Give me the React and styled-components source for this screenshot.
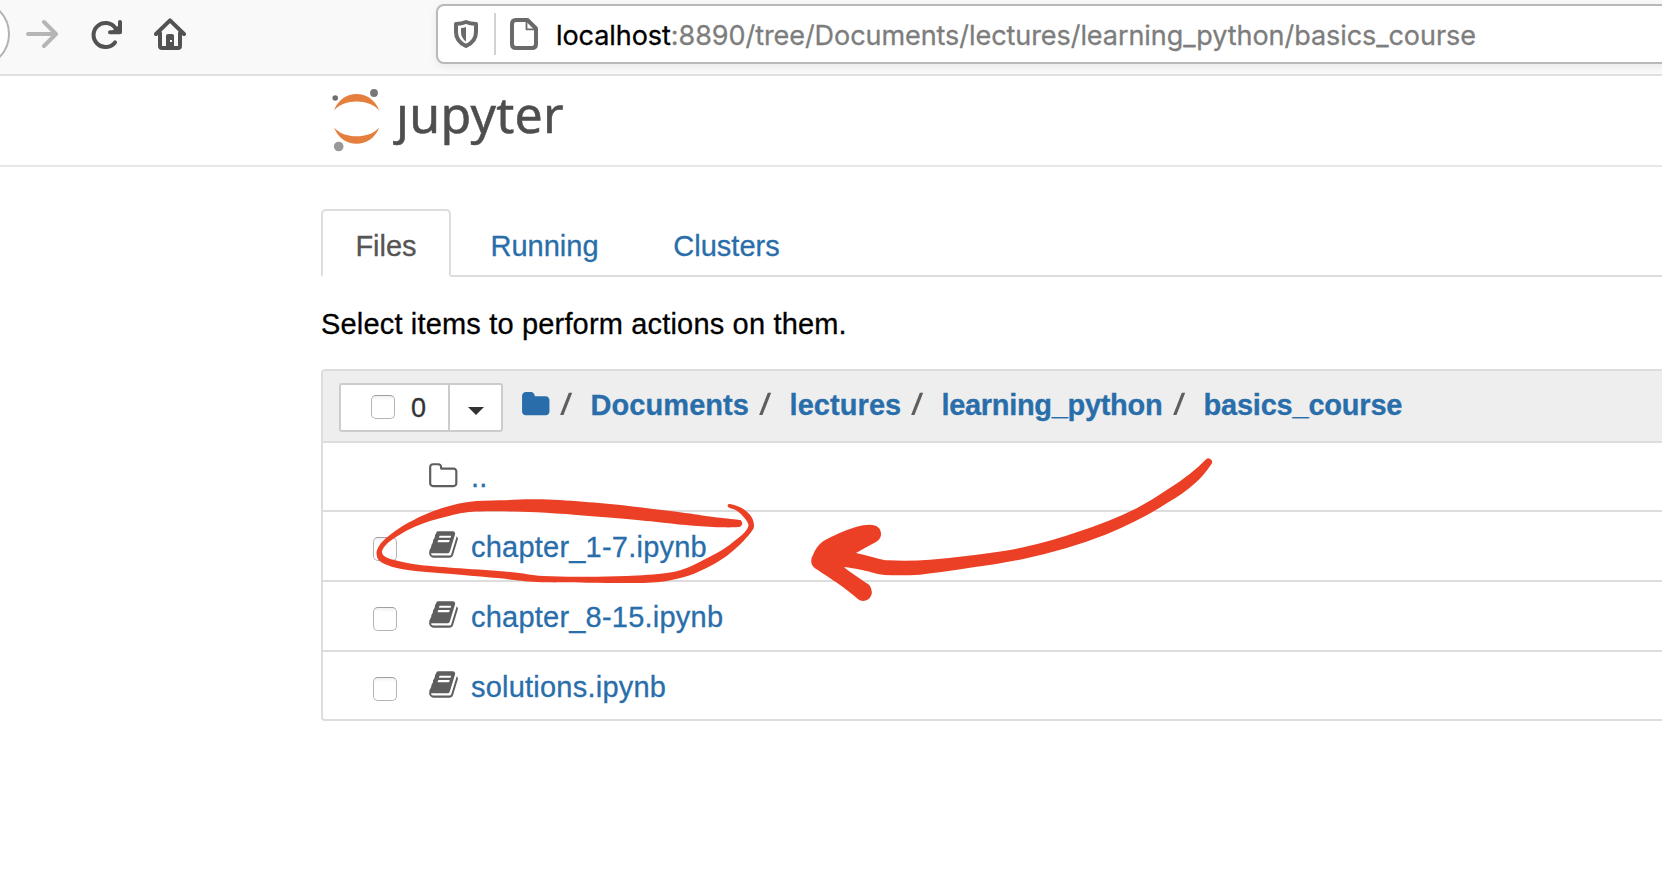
import React from "react";
import styled, { createGlobalStyle } from "styled-components";

const LINK = "#296eaa";
const RULE = "#dddddd";
const INK = "#5e5e5e";
const MARKER = "#ec4026";

const GlobalStyle = createGlobalStyle`
  * { box-sizing: border-box; }
  body {
    margin: 0;
    background: #fff;
    font-family: "Liberation Sans", Arial, sans-serif;
    font-size: 29px;
    line-height: 40px;
    letter-spacing: 0;
    -webkit-text-stroke: 0.3px currentColor;
    color: #000;
  }
  a { color: ${LINK}; text-decoration: none; }
  svg { display: block; flex: none; }
`;

const Window = styled.div`
  position: relative;
  width: 1662px;
  height: 874px;
  overflow: hidden;
  background: #fff;
`;

/* ---------- browser chrome ---------- */

const Toolbar = styled.div`
  display: flex;
  align-items: flex-start;
  height: 76px;
  background: #f9f9fa;
  border-bottom: 2px solid #e0e0e1;
`;

const BackButton = styled.div`
  flex: none;
  width: 68px;
  height: 68px;
  margin-left: -58px;
  border: 2px solid #b2b2b3;
  border-radius: 50%;
  background: #fff;
`;

const NavIcons = styled.div`
  display: flex;
  flex: none;
  gap: 32px;
  padding: 18px 0 0 14px;
  width: 426px;
`;

const UrlBar = styled.div`
  display: flex;
  align-items: center;
  flex: none;
  width: 1300px;
  height: 60px;
  margin-top: 4px;
  padding-left: 16px;
  border: 2px solid #b9b9ba;
  border-radius: 8px;
  background: #fff;
  box-shadow: 0 2px 8px rgba(0, 0, 0, 0.07);
`;

const UrlDivider = styled.div`
  width: 2px;
  height: 42px;
  margin: 0 14px 0 16px;
  background: #d2d2d3;
`;

const Address = styled.div`
  margin-left: 18px;
  padding-top: 3px;
  font-family: Inter, "Liberation Sans", sans-serif;
  font-size: 27px;
  letter-spacing: -0.06px;
  white-space: nowrap;
  color: #7d7d7d;
`;

const Host = styled.span`
  color: #000;
`;

/* ---------- page ---------- */

const Header = styled.header`
  display: flex;
  align-items: flex-start;
  height: 91px;
  padding: 12px 0 0 331px;
  border-bottom: 2px solid #e7e7e7;
`;

const Wordmark = styled.div`
  margin: -14px 0 0 15px;
  font-family: "Noto Sans", "Open Sans", sans-serif;
  font-size: 50px;
  line-height: 80px;
  letter-spacing: 0.3px;
  -webkit-text-stroke: 0.5px #4e4e4e;
  color: #4e4e4e;
`;

const Content = styled.main`
  padding: 42px 0 0 321px;
`;

const TabBar = styled.nav`
  display: flex;
  gap: 4px;
  height: 68px;
  border-bottom: 2px solid ${RULE};
`;

const Tab = styled.a`
  width: ${(p) => p.$width}px;
  height: 68px;
  padding-top: 15px;
  text-align: center;
  border: 2px solid ${(p) => (p.$active ? RULE : "transparent")};
  border-bottom-color: ${(p) => (p.$active ? "#fff" : "transparent")};
  border-radius: 5px 5px 0 0;
  color: ${(p) => (p.$active ? "#555" : LINK)};
`;

const Hint = styled.p`
  margin: 27px 0 25px;
  letter-spacing: 0.17px;
`;

const Panel = styled.section`
  width: 1400px;
  height: 352px;
  border: 2px solid ${RULE};
  border-radius: 4px;
  overflow: hidden;
`;

const PanelHead = styled.div`
  display: flex;
  align-items: flex-start;
  height: 72px;
  padding: 12px 0 0 16px;
  background: #eee;
  border-bottom: 2px solid ${RULE};
`;

const ButtonGroup = styled.div`
  display: flex;
  width: 164px;
  height: 49px;
  border: 2px solid #ccc;
  border-radius: 3px;
  background: #fff;
`;

const SelectAll = styled.div`
  display: flex;
  align-items: flex-start;
  gap: 16px;
  width: 109px;
  padding: 10px 0 0 30px;
  border-right: 2px solid #ccc;
`;

const Count = styled.span`
  margin-top: -7px;
  font-size: 27px;
  color: #333;
`;

const CaretButton = styled.div`
  padding: 22px 0 0 18px;
`;

const Caret = styled.div`
  border: 8px solid transparent;
  border-top-color: #333;
  border-bottom: 0;
`;

const Checkbox = styled.div`
  flex: none;
  width: 24px;
  height: 24px;
  border: 1.5px solid #b4b4b4;
  border-top-color: #a0a0a0;
  border-radius: 5px;
  background: linear-gradient(#f1f1f1, #fff 20%);
`;

const Breadcrumb = styled.div`
  display: flex;
  padding: 2px 0 0 18px;
`;

const FolderLink = styled.a`
  padding-top: 5px;
  margin-right: 9px;
`;

const Crumb = styled.a`
  font-weight: 700;
  width: ${(p) => p.$width}px;
  letter-spacing: ${(p) => p.$spacing}px;
`;

const Slash = styled.span`
  width: 31px;
  display: block;
  padding-top: 7px;
`;

const Row = styled.div`
  display: flex;
  align-items: flex-start;
  height: ${(p) => p.$height || 70}px;
  padding-left: 50px;
  border-bottom: 2px solid ${RULE};
  &:last-child { border-bottom: 0; }
  ${Checkbox} { margin-top: 25px; }
`;

const CheckSpace = styled.div`
  width: 24px;
`;

const RowIcon = styled.div`
  width: 30px;
  margin: ${(p) => p.$top || 16.5}px 13px 0 31px;
`;

const Name = styled.a`
  padding-top: ${(p) => p.$top || 15}px;
  letter-spacing: 0.22px;
`;

const Annotation = styled.svg`
  position: absolute;
  left: 0;
  top: 0;
  pointer-events: none;
`;

/* ---------- icons ---------- */

const ForwardIcon = () => (
  <svg width="34" height="32" viewBox="0 0 34 32" fill="none" stroke="#b5b5b6" strokeWidth="4" strokeLinecap="round" strokeLinejoin="round">
    <path d="M4 16H31M20 4L32 16L20 28" />
  </svg>
);

const ReloadIcon = () => (
  <svg width="32" height="32" viewBox="0 0 32 32" fill="none" stroke="#525252" strokeWidth="4" strokeLinecap="round">
    <path d="M25.3 10A12 12 0 1 0 25 24.4" />
    <path d="M30 4V14.3H20" strokeLinejoin="round" />
    <path d="M22 13L29 7V14Z" fill="#525252" stroke="none" />
  </svg>
);

const HomeIcon = () => (
  <svg width="32" height="34" viewBox="0 0 32 34" fill="none" stroke="#525252" strokeWidth="4" strokeLinecap="round" strokeLinejoin="round">
    <path d="M2 16L16 2.4L30 16" />
    <path d="M6 15V28Q6 30 8 30H24Q26 30 26 28V15" />
    <path d="M12 29V18Q12 16 14 16H18Q20 16 20 18V29Z" fill="#525252" stroke="none" />
    <rect x="16" y="22" width="2" height="2" fill="#f9f9fa" stroke="none" />
  </svg>
);

const ShieldIcon = () => (
  <svg width="24" height="28" viewBox="0 0 24 28">
    <path d="M12 2Q16 3.600 22 4V12Q22 21.500 12 26Q2 21.500 2 12V4Q8 3.600 12 2Z" fill="none" stroke="#6a6a6a" strokeWidth="4" strokeLinejoin="round" />
    <path d="M12 7V21.500Q7 18 7 12V8Q10 8 12 7Z" fill="#6a6a6a" />
  </svg>
);

const PageIcon = () => (
  <svg width="28" height="32" viewBox="0 0 28 32" fill="none" stroke="#6a6a6a" strokeLinejoin="round">
    <path d="M6 2H17.500L26 10.500V26Q26 30 22 30H6Q2 30 2 26V6Q2 2 6 2Z" strokeWidth="4" />
    <path d="M16.500 3V11.300H25" strokeWidth="1.800" />
  </svg>
);

const JupyterMark = () => (
  <svg width="50" height="66" viewBox="331 88 50 66">
    <path d="M334 110.500C342 88.600 371 88.600 379.300 110.500C369 98.500 344 98.500 334 110.500Z" fill="#e57f3e" />
    <path d="M334 127.500C342 149.200 371 149.200 379.300 127.500C369 139.300 344 139.300 334 127.500Z" fill="#e57f3e" />
    <circle cx="335.200" cy="98" r="2.800" fill="#6f6f6f" />
    <circle cx="374" cy="93" r="3.900" fill="#767677" />
    <circle cx="338.700" cy="146.500" r="4.800" fill="#989898" />
  </svg>
);

const FolderOpenOutline = () => (
  <svg width="30.5" height="30.5" viewBox="0 0 1792 1792" fill={INK}>
    <path d="M1600 1312v-704q0-40-28-68t-68-28h-704q-40 0-68-28t-28-68v-64q0-40-28-68t-68-28h-320q-40 0-68 28t-28 68v960q0 40 28 68t68 28h1216q40 0 68-28t28-68zm128-704v704q0 92-66 158t-158 66h-1216q-92 0-158-66t-66-158v-960q0-92 66-158t158-66h320q92 0 158 66t66 158v32h672q92 0 158 66t66 158z" />
  </svg>
);

const FolderSolid = () => (
  <svg width="29.5" height="29.5" viewBox="0 0 1792 1792" fill={LINK}>
    <path d="M1728 608v704q0 92-66 158t-158 66h-1216q-92 0-158-66t-66-158v-960q0-92 66-158t158-66h320q92 0 158 66t66 158v32h672q92 0 158 66t66 158z" />
  </svg>
);

const BookIcon = () => (
  <svg width="31" height="31" viewBox="0 0 1792 1792" fill={INK}>
    <path d="M1703 478q40 57 18 129l-275 906q-19 64-76.500 107.500t-122.500 43.500h-923q-77 0-148.500-53.500t-99.500-131.500q-24-67-2-127 0-4 3-27t4-37q1-8-3-21.500t-3-19.500q2-11 8-21t16.500-23.500 16.500-23.500q23-38 45-91.500t30-91.500q3-10 .5-30t-.5-28q3-11 17-28t17-23q21-36 42-92t25-90q1-9-2.500-32t.5-28q4-13 22-30.500t22-22.500q19-26 42.500-84.500t27.500-96.500q1-8-3-25.500t-2-26.500q2-8 9-18t18-23 17-21q8-12 16.500-30.500t15-35 16-36 19.500-32 26.500-23.500 36-11.500 47.500 5.500l-1 3q38-9 51-9h761q74 0 114 56t18 130l-274 906q-36 119-71.500 153.500t-128.500 34.500h-869q-27 0-38 15-11 16-1 43 24 70 144 70h923q29 0 56-15.500t35-41.500l300-987q7-22 5-57 38 15 59 43zm-1064 2q-4 13 2 22.500t20 9.500h608q13 0 25.500-9.500t16.500-22.500l21-64q4-13-2-22.500t-20-9.500h-608q-13 0-25.500 9.500t-16.500 22.500zm-83 256q-4 13 2 22.500t20 9.500h608q13 0 25.500-9.500t16.500-22.500l21-64q4-13-2-22.500t-20-9.500h-608q-13 0-25.500 9.500t-16.500 22.500z" />
  </svg>
);

const SlashMark = () => (
  <Slash>
    <svg width="13" height="24" viewBox="0 0 13 24">
      <path d="M8.800 0.800H12.200L3.500 23H0.100Z" fill={INK} />
    </svg>
  </Slash>
);

/* Closed curve through a list of points. */
function smooth(pts) {
  const n = pts.length;
  const at = (i) => pts[(i + n) % n];
  let d = `M${pts[0]}`;
  for (let i = 0; i < n; i++) {
    const [a, b, c, e] = [at(i - 1), at(i), at(i + 1), at(i + 2)];
    d += `C${b[0] + (c[0] - a[0]) / 6} ${b[1] + (c[1] - a[1]) / 6} ${c[0] - (e[0] - b[0]) / 6} ${c[1] - (e[1] - b[1]) / 6} ${c}`;
  }
  return d + "Z";
}

const RING = [
  [1147, 100], [1143, 92], [1134, 89], [1060, 81], [960, 67], [800, 47], [670, 35], [530, 28], [420, 31], [330, 35], [260, 50], [190, 76],
  [120, 113], [75, 147], [54, 173], [50, 194], [60, 214], [95, 230], [160, 242], [300, 254], [420, 265], [530, 276],
  [680, 278], [800, 279], [890, 277], [970, 262], [1035, 236], [1090, 205], [1135, 168], [1172, 128], [1182, 107], [1174, 80], [1150, 57],
  [1125, 46], [1107, 42], [1103, 48], [1108, 53], [1128, 61], [1150, 80], [1165, 103], [1157, 123], [1130, 148], [1085, 181], [1030, 210],
  [980, 234], [920, 249], [800, 258], [680, 260], [550, 258], [450, 246], [300, 235], [180, 225], [115, 213], [78, 202],
  [66, 187], [75, 168], [100, 146], [150, 117], [210, 93], [270, 77], [330, 66], [420, 64], [530, 67], [650, 75], [800, 87],
  [910, 98], [1000, 107], [1090, 112], [1134, 111], [1143, 108],
];

const ARROW =
  "M1246 60Q1252 52 1260 56Q1270 62 1265 71Q1240 108 1215 130Q1180 162 1130 190Q1060 236 950 283Q830 330 700 357Q640 370 550 382Q450 398 390 404Q340 407 285 405C255 403 235 390 162 381Q175 393 238 435Q249 450 244 466C236 485 214 488 200 474C160 440 140 428 75 385Q55 368 70 343Q78 320 100 303Q150 275 200 260Q225 253 248 255Q275 260 273 284Q272 297 258 306Q235 318 198 339Q225 345 255 353C270 357 282 361 295 361Q360 364 420 359Q490 353 560 344Q640 335 700 322Q790 302 860 277Q960 245 1040 205Q1090 178 1130 150Q1170 125 1200 101Q1225 82 1246 60Z";

const files = [
  { name: "chapter_1-7.ipynb", height: 70 },
  { name: "chapter_8-15.ipynb", height: 70 },
  { name: "solutions.ipynb", height: 67 },
];

const crumbs = [
  { name: "Documents", width: 168, spacing: 0.07 },
  { name: "lectures", width: 121, spacing: 0.07 },
  { name: "learning_python", width: 231, spacing: -0.32 },
  { name: "basics_course", width: 230, spacing: -0.21 },
];

export default function App() {
  return (
    <Window>
      <GlobalStyle />
      <Toolbar>
        <BackButton />
        <NavIcons>
          <ForwardIcon />
          <ReloadIcon />
          <HomeIcon />
        </NavIcons>
        <UrlBar>
          <ShieldIcon />
          <UrlDivider />
          <PageIcon />
          <Address>
            <Host>localhost</Host>:8890/tree/Documents/lectures/learning_python/basics_course
          </Address>
        </UrlBar>
      </Toolbar>

      <Header>
        <JupyterMark />
        <Wordmark>ȷupyter</Wordmark>
      </Header>

      <Content>
        <TabBar>
          <Tab $active $width={130}>Files</Tab>
          <Tab $width={179}>Running</Tab>
          <Tab $width={177}>Clusters</Tab>
        </TabBar>
        <Hint>Select items to perform actions on them.</Hint>
        <Panel>
          <PanelHead>
            <ButtonGroup>
              <SelectAll>
                <Checkbox />
                <Count>0</Count>
              </SelectAll>
              <CaretButton>
                <Caret />
              </CaretButton>
            </ButtonGroup>
            <Breadcrumb>
              <FolderLink>
                <FolderSolid />
              </FolderLink>
              {crumbs.map((c) => (
                <React.Fragment key={c.name}>
                  <SlashMark />
                  <Crumb $width={c.width} $spacing={c.spacing}>{c.name}</Crumb>
                </React.Fragment>
              ))}
            </Breadcrumb>
          </PanelHead>
          <Row $height={69}>
            <CheckSpace />
            <RowIcon $top={18}>
              <FolderOpenOutline />
            </RowIcon>
            <Name $top={14}>..</Name>
          </Row>
          {files.map((f) => (
            <Row key={f.name} $height={f.height}>
              <Checkbox />
              <RowIcon>
                <BookIcon />
              </RowIcon>
              <Name>{f.name}</Name>
            </Row>
          ))}
        </Panel>
      </Content>

      <Annotation width="1662" height="874" viewBox="0 0 1662 874" fill={MARKER}>
        <path transform="translate(360 490) scale(0.33333)" d={smooth(RING)} />
        <path transform="translate(790 440) scale(0.33333)" d={ARROW} />
      </Annotation>
    </Window>
  );
}
